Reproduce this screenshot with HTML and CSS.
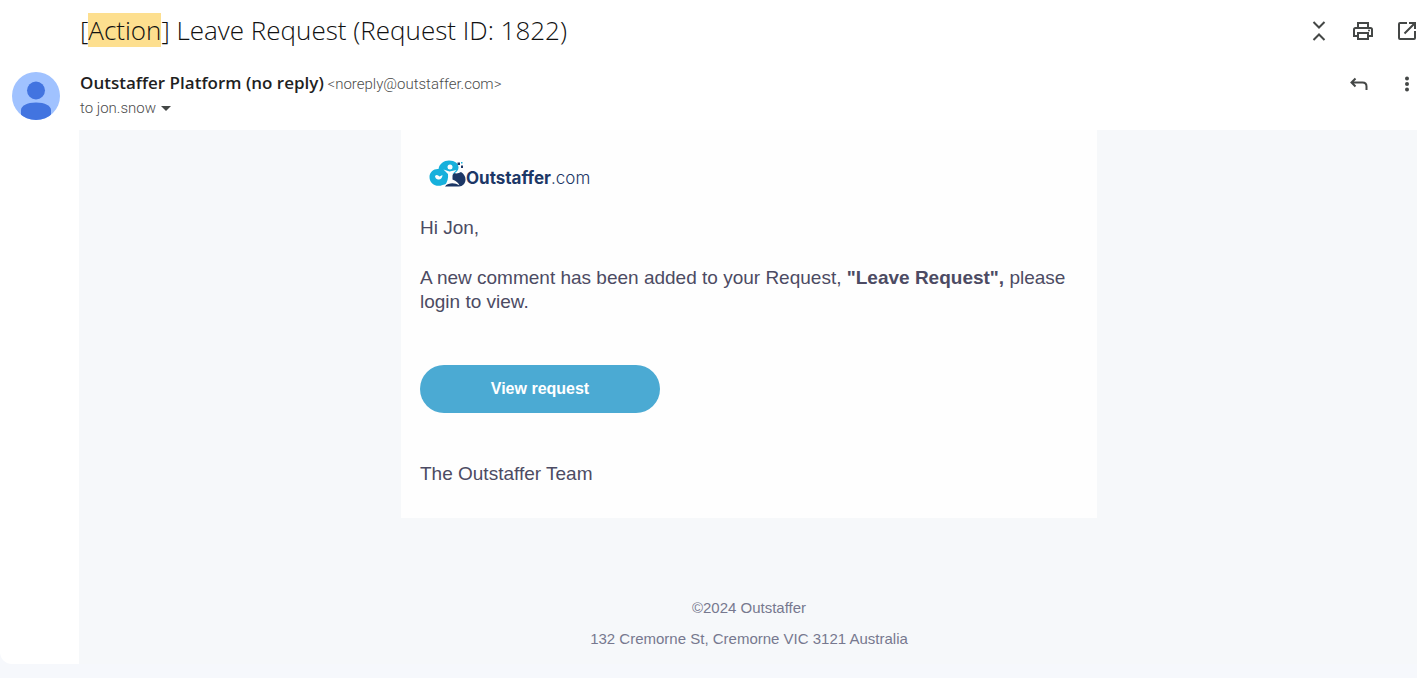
FILE: index.html
```
<!DOCTYPE html>
<html lang="en">
<head>
    <meta charset="UTF-8">
    <meta name="viewport" content="width=device-width, initial-scale=1.0">
    <title>[Action] Leave Request (Request ID: 1822)</title>
    <link rel="stylesheet" href="styles.css">
</head>
<body>
    <main class="message">
        <header class="subject-row">
            <h1>[<mark>Action</mark>] Leave Request (Request ID: 1822)</h1>
            <div class="actions">
                <button type="button" aria-label="Collapse all">
                    <svg viewBox="2 2 20 20"><path d="M6.5 3l5.5 5.500 5.500-5.500M6.500 21l5.500-5.500 5.500 5.500" /></svg>
                </button>
                <button type="button" aria-label="Print all">
                    <svg viewBox="2 2 20 20"><path d="M7 8V4h10v4M7 17H3v-6.500Q3 9 4.500 9h15Q21 9 21 10.500V17h-4M7 14h10v6H7z" /><circle class="dot" cx="18" cy="11.500" r="1" /></svg>
                </button>
                <button type="button" aria-label="In new window">
                    <svg viewBox="2 2 20 20"><path d="M12 4H5Q4 4 4 5v14q0 1 1 1h14q1 0 1-1v-7M14 4h6v6M20 4L9.500 14.500" /></svg>
                </button>
            </div>
        </header>

        <section class="sender-row">
            <svg class="avatar" viewBox="0 0 48 48">
                <clipPath id="avatarClip"><circle cx="24" cy="24" r="24" /></clipPath>
                <g clip-path="url(#avatarClip)">
                    <rect width="48" height="48" fill="#a0c2ff" />
                    <circle cx="24" cy="18.500" r="9" fill="#4274e0" />
                    <path d="M9 50V38c0-4 6-7.500 15-7.500S39 34 39 38v12z" fill="#4274e0" />
                </g>
            </svg>
            <div class="sender">
                <div class="from">
                    <span class="name">Outstaffer Platform (no reply)</span>
                    <span class="email">&lt;noreply@outstaffer.com&gt;</span>
                </div>
                <button type="button" class="recipient">to jon.snow <span class="caret"></span></button>
            </div>
            <div class="actions sender-actions">
                <button type="button" aria-label="Reply">
                    <svg viewBox="2 2 20 20"><path d="M8.500 6.500L4.500 10.500l4 4M4.500 10.500h11q4 0 4 4v3.500" /></svg>
                </button>
                <button type="button" aria-label="More">
                    <svg viewBox="2 2 20 20"><g class="dot"><circle cx="12" cy="6.500" r="2" /><circle cx="12" cy="12" r="2" /><circle cx="12" cy="17.500" r="2" /></g></svg>
                </button>
            </div>
        </section>

        <div class="mail-body">
            <article class="card">
                <div class="logo">
                    <svg class="logo-mark" viewBox="0 0 38 28">
                        <path d="M17 26.500C21 22 22 17 26 13c3 1 5 0 7-1 3 2 4.500 4.500 4.500 7.500 0 4-3 7-6.500 7z" fill="#1c3766" />
                        <path d="M14.500 25C9 27.500 1.500 24.500 1.500 17 1.500 12 6 8.500 10.500 9 11.500 3.500 16 .5 21 .5c6 0 9.500 3 9.500 7 0 3-2.500 5.500-6 6.500l-6 10z" fill="#16b0dc" />
                        <path d="M15.500 9.500l6 2 7-1.500-4 4v5.500c4 1.500 6 3.500 7 6-5-3-10-3-15 .5 3-4 4-8 3.500-12z" fill="#fefefe" />
                        <path d="M7 16c1.500-1.500 3-1 4.500.5l3-1.500c0 3-2 5-4.500 4.500-2-.5-3-2-3-3.500z" fill="#fefefe" />
                        <circle cx="22" cy="7" r="2.500" fill="#fefefe" />
                        <path d="M29.500 2.500H32V5h-2.500zM33 5.500h2V8h-2z" fill="#1c3766" />
                        <path d="M33 2h1.500v1.500H33z" fill="#16b0dc" />
                    </svg>
                    <span class="logo-text"><b>Outstaffer</b>.com</span>
                </div>
                <p>Hi Jon,</p>
                <p>A new comment has been added to your Request, <b>"Leave Request",</b> please login to view.</p>
                <a href="#" class="view-button">View request</a>
                <p>The Outstaffer Team</p>
            </article>
            <footer>
                <p>©2024 Outstaffer</p>
                <p>132 Cremorne St, Cremorne VIC 3121 Australia</p>
            </footer>
        </div>
    </main>
</body>
</html>
```
FILE: styles.css
```
* {
    box-sizing: border-box;
}
body {
    margin: 0;
    background-color: #f6f8fc;
    color: #1f1f1f;
    font-family: Roboto, Arial, sans-serif;
}
h1, p {
    margin: 0;
}
button {
    padding: 0;
    border: none;
    background: none;
    color: inherit;
    font: inherit;
    cursor: pointer;
}
.message {
    background-color: #fff;
    border-bottom-left-radius: 12px;
    overflow: hidden;
}
.subject-row {
    display: flex;
    justify-content: space-between;
    align-items: center;
    height: 60px;
    padding-left: 80px;
}
h1 {
    color: #111;
    font-family: "Open Sans", Arial, sans-serif;
    font-size: 26px;
    font-weight: 300;
    line-height: 34px;
}
mark {
    display: inline-block;
    background-color: #fddf8f;
    color: inherit;
}
.actions {
    display: flex;
    gap: 24px;
    padding-top: 2px;
}
.actions button, .actions svg {
    display: block;
    width: 20px;
    height: 20px;
}
.actions path {
    fill: none;
    stroke: #444746;
    stroke-width: 2;
}
.actions .dot {
    fill: #444746;
}
.sender-row {
    display: flex;
    height: 70px;
    padding: 12px 0 0 12px;
}
.avatar {
    width: 48px;
    height: 48px;
    margin-right: 20px;
}
.sender {
    flex: 1;
    color: #4c4c4c;
    font-size: 15px;
    font-weight: 300;
}
.from {
    line-height: 22px;
}
.name {
    color: #1f1f1f;
    font-family: "Open Sans", Arial, sans-serif;
    font-size: 17px;
    font-weight: 600;
}
.recipient {
    display: flex;
    align-items: center;
    gap: 5px;
    line-height: 26px;
}
.caret {
    border: 5px solid transparent;
    border-top-color: #444746;
    border-bottom: none;
}
.sender-actions {
    gap: 28px;
}
.mail-body {
    min-height: 534px;
    margin-left: 79px;
    padding: 0 20px 0 22px;
    background-color: #f6f8fa;
    font-family: "Liberation Sans", Arial, sans-serif;
}
.card {
    max-width: 696px;
    margin: 0 auto;
    padding: 29px 19px 32px;
    background-color: #fefefe;
    color: #4c4b63;
    font-size: 19px;
    line-height: 24px;
}
.card p {
    margin-bottom: 26px;
}
.card p:last-child {
    margin-bottom: 0;
}
.logo {
    display: flex;
    align-items: center;
    height: 30px;
    margin: 0 0 27px 8px;
}
.logo-mark {
    width: 38px;
    height: 28px;
}
.logo-text {
    padding-top: 7px;
    color: #1c3766;
    font-family: Inter, Arial, sans-serif;
    font-size: 17px;
    font-weight: 300;
}
.logo-text b {
    font-weight: 700;
}
.view-button {
    display: block;
    width: 240px;
    margin: 51px 0 49px;
    border-radius: 24px;
    background-color: #4baad3;
    color: #fff;
    font-size: 16px;
    font-weight: bold;
    line-height: 48px;
    text-align: center;
    text-decoration: none;
}
footer {
    padding: 74px 0 10px;
    color: #77788f;
    font-size: 15px;
    line-height: 31px;
    text-align: center;
}
```
